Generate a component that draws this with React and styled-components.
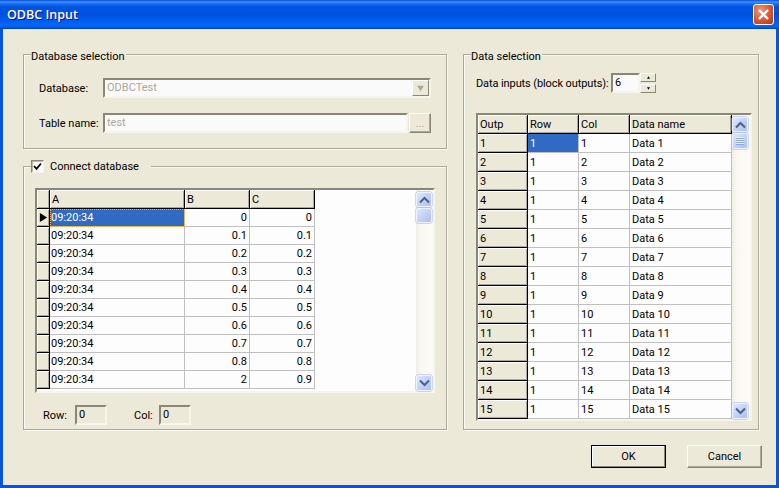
import React from 'react'
import styled, { createGlobalStyle } from 'styled-components'

const GlobalStyle = createGlobalStyle`
  html, body {
    margin: 0;
    padding: 0;
    background: #0054e3;
  }
  * {
    box-sizing: border-box;
  }
`

const Window = styled.div`
  width: 779px;
  height: 488px;
  display: flex;
  flex-direction: column;
  overflow: hidden;
  font-family: Roboto, "Liberation Sans", Arial, sans-serif;
  font-size: 11px;
  color: #000;
  background: #0855dd;
`

const TitleBar = styled.div`
  height: 29px;
  flex: none;
  display: flex;
  align-items: center;
  justify-content: space-between;
  padding: 0 5px 0 7px;
  background: linear-gradient(
    to bottom,
    #0a4fd8 0,
    #3a93ff 7%,
    #1a6cf0 13%,
    #0054e3 24%,
    #0050de 50%,
    #0060f4 76%,
    #0068fa 90%,
    #0a4cd0 97%,
    #003cc0 100%
  );
`

const Title = styled.div`
  font-family: "Open Sans", sans-serif;
  font-weight: 600;
  font-size: 12.5px;
  color: #fff;
  text-shadow: 1px 1px 0 #0f1089;
`

const CloseButton = styled.div`
  width: 21px;
  height: 21px;
  display: flex;
  align-items: center;
  justify-content: center;
  border: 1px solid #fff;
  border-radius: 3px;
  background: radial-gradient(circle at 35% 30%, #ea9a80 0, #d9552f 55%, #b8330f 100%);
`

const Body = styled.div`
  flex: 1;
  margin: 0 3px 3px;
  padding: 25px 14px 0 20px;
  background: #ece9d8;
  display: flex;
  flex-direction: column;
`

const Columns = styled.div`
  display: flex;
  gap: 16px;
`

const LeftColumn = styled.div`
  width: 424px;
  display: flex;
  flex-direction: column;
  gap: 17px;
`

const GroupBox = styled.div`
  position: relative;
  width: ${p => p.$width || 'auto'};
  height: ${p => p.$height}px;
  padding: ${p => p.$padding};
  border: 1px solid #aca899;
  box-shadow: 1px 1px 0 #faf9f2, inset 1px 1px 0 #faf9f2;
`

const Caption = styled.div`
  position: absolute;
  top: ${p => (p.$check ? '-8px' : '-6px')};
  left: 7px;
  height: 15px;
  display: flex;
  align-items: center;
  gap: 6px;
  padding: ${p => (p.$check ? '0 12px 0 0' : '0 1px 0 0')};
  background: #ece9d8;
`

const CheckBox = styled.div`
  width: 13px;
  height: 13px;
  display: flex;
  align-items: center;
  justify-content: center;
  background: #fafafa;
  border: 1px solid;
  border-color: #8a8776 #f6f5ec #f6f5ec #8a8776;
  box-shadow: inset 1px 1px 0 #bdb9a6;
`

const FormRow = styled.div`
  display: flex;
  align-items: center;
  height: ${p => p.$height}px;
  margin-bottom: ${p => p.$gap || 0}px;
`

const FieldLabel = styled.div`
  width: 64px;
  flex: none;
`

const Sunken = styled.div`
  position: relative;
  width: ${p => p.$width}px;
  height: ${p => p.$height}px;
  flex: none;
  padding: 1px 0 0 2px;
  line-height: 14px;
  color: ${p => (p.$disabled ? '#aca899' : '#000')};
  background: ${p => p.$bg || '#fafafa'};
  border: 2px solid;
  border-color: #8a8776 #f6f5ec #f6f5ec #8a8776;
`

const ComboButton = styled.div`
  position: absolute;
  top: 0;
  right: 0;
  width: 17px;
  height: 16px;
  display: flex;
  align-items: center;
  justify-content: center;
  background: #ece9d8;
  border: 1px solid;
  border-color: #fff #8a8776 #8a8776 #fff;
`

const PushButton = styled.div`
  width: ${p => p.$width}px;
  height: ${p => p.$height}px;
  flex: none;
  margin-left: ${p => p.$offset || 0}px;
  display: flex;
  align-items: center;
  justify-content: center;
  color: ${p => (p.$disabled ? '#aca899' : '#000')};
  background: #ece9d8;
  border: 1px solid;
  border-color: ${p => (p.$default ? '#000' : '#fff #8a8776 #8a8776 #fff')};
  box-shadow: ${p => (p.$default
    ? 'inset -1px -1px 0 #8a8776, inset 1px 1px 0 #fff'
    : 'inset -1px -1px 0 #aca899')};
`

const GridFrame = styled.div`
  width: ${p => p.$width}px;
  height: ${p => p.$height}px;
  display: flex;
  background: #fdfdfd;
  border: 2px solid;
  border-color: #8a8776 #f6f5ec #f6f5ec #8a8776;
`

const GridCells = styled.div`
  flex: 1;
  min-width: 0;
  overflow: hidden;
`

const GridRow = styled.div`
  display: grid;
  grid-template-columns: ${p => p.$columns};
  width: max-content;
  height: ${p => p.$height}px;
`

const HeaderCell = styled.div`
  display: flex;
  align-items: center;
  padding-left: 2px;
  overflow: hidden;
  background: #ece9d8;
  border-right: 1px solid #000;
  border-bottom: 1px solid #000;
  box-shadow: inset 1px 1px 0 #fff, inset -1px -1px 0 #aca899;
`

const IndicatorCell = styled(HeaderCell)`
  justify-content: center;
  padding-left: 1px;
`

const DataCell = styled.div`
  display: flex;
  align-items: center;
  justify-content: ${p => (p.$right ? 'flex-end' : 'flex-start')};
  padding: 0 2px 0 ${p => p.$indent || 1}px;
  overflow: hidden;
  color: ${p => (p.$selected ? '#fff' : '#000')};
  background: ${p => (p.$selected ? '#316ac5' : '#fdfdfd')};
  border-right: 1px solid #c0c0c0;
  border-bottom: 1px solid #c0c0c0;
  outline: ${p => (p.$focus ? '1px dotted #e8b050' : 'none')};
  outline-offset: -1px;
`

const ScrollTrack = styled.div`
  width: 17px;
  flex: none;
  display: flex;
  flex-direction: column;
  gap: 1px;
  padding-top: 2px;
  margin-right: ${p => p.$inset || 0}px;
  background: linear-gradient(to right, #f0efe6 0, #f9f8f2 30%, #fbfbf7 100%);
`

const ScrollButton = styled.div`
  width: 16px;
  height: ${p => p.$height || 15}px;
  margin-top: ${p => (p.$bottom ? 'auto' : '0')};
  display: flex;
  align-items: center;
  justify-content: center;
  background: linear-gradient(135deg, #dfe8fd 0, #c3d2f9 50%, #aebff0 100%);
  border: 1px solid #eef3fe;
  border-radius: 2px;
  box-shadow: 0 0 0 0.5px #9db1e6;
`

const StatusRow = styled.div`
  display: flex;
  align-items: center;
  margin-top: 12px;
  padding-left: 8px;
`

const StatusLabel = styled.div`
  width: ${p => p.$width}px;
`

const StatusGap = styled.div`
  width: 27px;
`

const SpinRow = styled.div`
  display: flex;
  align-items: center;
  gap: 5px;
  height: 20px;
  margin-bottom: 20px;
`

const SpinLabel = styled.div`
  width: 130px;
  flex: none;
  white-space: nowrap;
  letter-spacing: -0.1px;
`

const SpinButtons = styled.div`
  display: flex;
  flex-direction: column;
  gap: 2px;
  margin-left: -5px;
`

const SpinButton = styled.div`
  width: 16px;
  height: 9px;
  display: flex;
  align-items: center;
  justify-content: center;
  background: #ece9d8;
  border: 1px solid;
  border-color: #fff #8a8776 #8a8776 #fff;
`

const Footer = styled.div`
  display: flex;
  justify-content: flex-end;
  gap: 21px;
  margin-top: 15px;
`

const Triangle = ({ w, h, dir = 'down', fill }) => (
  <svg width={w} height={h} viewBox="0 0 10 10">
    <path d={dir === 'down' ? 'M0 1 L10 1 L5 9 Z' : dir === 'up' ? 'M0 9 L10 9 L5 1 Z' : 'M1 0 L9 5 L1 10 Z'} fill={fill} />
  </svg>
)

const Chevron = ({ up }) => (
  <svg width="11" height="8" viewBox="0 0 11 8">
    <path
      d={up ? 'M1 6.5 L5.5 2 L10 6.5' : 'M1 1.5 L5.5 6 L10 1.5'}
      fill="none"
      stroke="#4d6185"
      strokeWidth="2"
    />
  </svg>
)

const Grip = () => (
  <svg width="8" height="8" viewBox="0 0 8 8">
    <path d="M0 .5H8M0 2.5H8M0 4.5H8M0 6.5H8" stroke="#eef4fe" strokeWidth="1" />
    <path d="M0 1.5H8M0 3.5H8M0 5.5H8M0 7.5H8" stroke="#8fa6e0" strokeWidth="1" />
  </svg>
)

const ScrollBar = ({ grip, thumbHeight, inset }) => (
  <ScrollTrack $inset={inset}>
    <ScrollButton><Chevron up /></ScrollButton>
    <ScrollButton $height={thumbHeight}>{grip && <Grip />}</ScrollButton>
    <ScrollButton $bottom $height={16}><Chevron /></ScrollButton>
  </ScrollTrack>
)

const leftColumns = '13px 135px 65px 65px'
const leftRows = [
  ['0', '0'], ['0.1', '0.1'], ['0.2', '0.2'], ['0.3', '0.3'], ['0.4', '0.4'],
  ['0.5', '0.5'], ['0.6', '0.6'], ['0.7', '0.7'], ['0.8', '0.8'], ['2', '0.9']
]

const rightColumns = '50px 51px 51px 102px'
const rightRows = Array.from({ length: 16 }, (_, i) => i + 1)

const App = () => (
  <Window>
    <GlobalStyle />
    <TitleBar>
      <Title>ODBC Input</Title>
      <CloseButton>
        <svg width="13" height="13" viewBox="0 0 13 13">
          <path d="M2 2 L11 11 M11 2 L2 11" stroke="#fff" strokeWidth="2.4" />
        </svg>
      </CloseButton>
    </TitleBar>
    <Body>
      <Columns>
        <LeftColumn>
          <GroupBox $height={95} $padding="23px 15px 0">
            <Caption>Database selection</Caption>
            <FormRow $height={20} $gap={15}>
              <FieldLabel>Database:</FieldLabel>
              <Sunken $width={328} $height={20} $disabled>
                ODBCTest
                <ComboButton>
                  <Triangle w={9} h={7} fill="#aca899" />
                </ComboButton>
              </Sunken>
            </FormRow>
            <FormRow $height={20}>
              <FieldLabel>Table name:</FieldLabel>
              <Sunken $width={305} $height={20} $disabled>test</Sunken>
              <PushButton $width={22} $height={20} $disabled $offset={1}>...</PushButton>
            </FormRow>
          </GroupBox>
          <GroupBox $height={264} $padding="21px 11px 0">
            <Caption $check>
              <CheckBox>
                <svg width="9" height="9" viewBox="0 0 9 9">
                  <path d="M1 4 L3.5 6.8 L8 1.5" fill="none" stroke="#000" strokeWidth="1.8" />
                </svg>
              </CheckBox>
              Connect database
            </Caption>
            <GridFrame $width={400} $height={205}>
              <GridCells>
                <GridRow $columns={leftColumns} $height={19}>
                  <IndicatorCell />
                  <HeaderCell>A</HeaderCell>
                  <HeaderCell>B</HeaderCell>
                  <HeaderCell>C</HeaderCell>
                </GridRow>
                {leftRows.map(([b, c], i) => (
                  <GridRow key={i} $columns={leftColumns} $height={18}>
                    <IndicatorCell>
                      {i === 0 && <Triangle w={9} h={13} dir="right" fill="#000" />}
                    </IndicatorCell>
                    <DataCell $selected={i === 0} $focus={i === 0}>09:20:34</DataCell>
                    <DataCell $right>{b}</DataCell>
                    <DataCell $right>{c}</DataCell>
                  </GridRow>
                ))}
              </GridCells>
              <ScrollBar thumbHeight={15} />
            </GridFrame>
            <StatusRow>
              <StatusLabel $width={32}>Row:</StatusLabel>
              <Sunken $width={32} $height={20} $bg="#ece9d8">0</Sunken>
              <StatusGap />
              <StatusLabel $width={25}>Col:</StatusLabel>
              <Sunken $width={32} $height={20} $bg="#ece9d8">0</Sunken>
            </StatusRow>
          </GroupBox>
        </LeftColumn>
        <GroupBox $width="296px" $height={376} $padding="18px 12px 0">
          <Caption>Data selection</Caption>
          <SpinRow>
            <SpinLabel>Data inputs (block outputs):</SpinLabel>
            <Sunken $width={29} $height={20}>6</Sunken>
            <SpinButtons>
              <SpinButton><Triangle w={5} h={3} dir="up" fill="#000" /></SpinButton>
              <SpinButton><Triangle w={5} h={3} fill="#000" /></SpinButton>
            </SpinButtons>
          </SpinRow>
          <GridFrame $width={276} $height={308}>
            <GridCells>
              <GridRow $columns={rightColumns} $height={19}>
                <HeaderCell>Outp</HeaderCell>
                <HeaderCell>Row</HeaderCell>
                <HeaderCell>Col</HeaderCell>
                <HeaderCell>Data name</HeaderCell>
              </GridRow>
              {rightRows.map(n => (
                <GridRow key={n} $columns={rightColumns} $height={19}>
                  <HeaderCell>{n < 16 ? n : ''}</HeaderCell>
                  <DataCell $indent={2} $selected={n === 1}>{n < 16 ? 1 : ''}</DataCell>
                  <DataCell $indent={2}>{n < 16 ? n : ''}</DataCell>
                  <DataCell $indent={2}>{n < 16 ? `Data ${n}` : ''}</DataCell>
                </GridRow>
              ))}
            </GridCells>
            <ScrollBar grip thumbHeight={16} inset={1} />
          </GridFrame>
        </GroupBox>
      </Columns>
      <Footer>
        <PushButton $width={75} $height={23} $default>OK</PushButton>
        <PushButton $width={75} $height={23}>Cancel</PushButton>
      </Footer>
    </Body>
  </Window>
)

export default App
